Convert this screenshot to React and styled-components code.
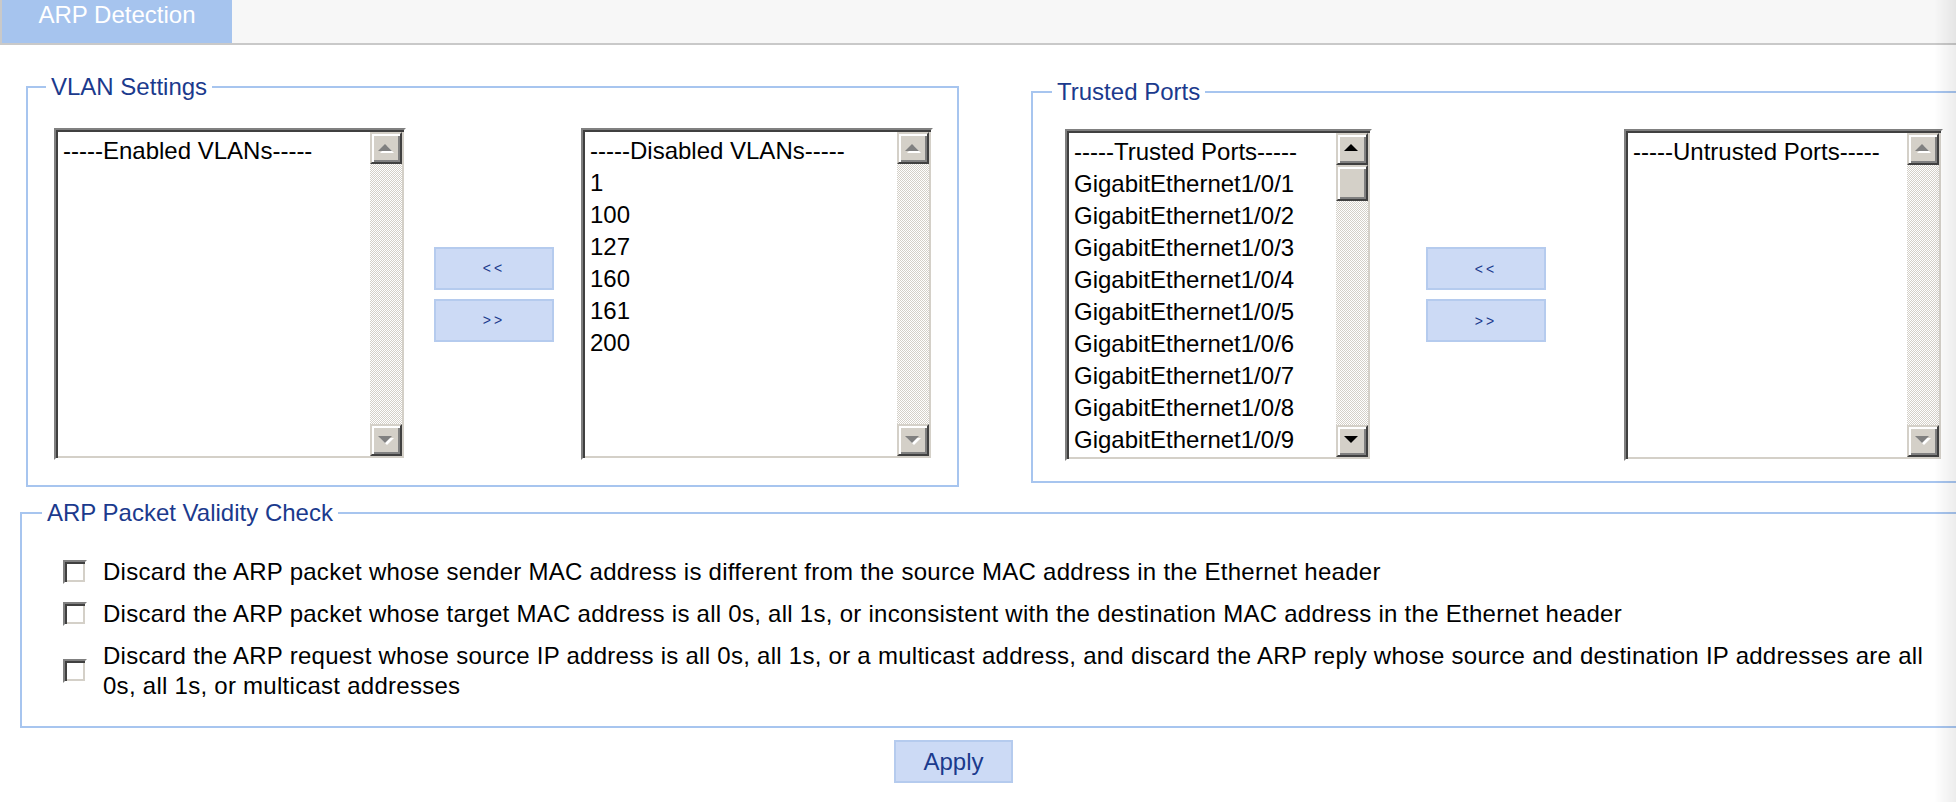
import React from "react"
import styled, { createGlobalStyle } from "styled-components"

const GlobalStyle = createGlobalStyle`
  html, body {
    margin: 0;
    padding: 0;
    background: #ffffff;
    overflow: hidden;
  }
  body {
    font-family: "Liberation Sans", Arial, sans-serif;
    font-size: 24px;
    color: #000;
  }
`

const Page = styled.div`
  width: 1956px;
  height: 802px;
  overflow: hidden;
`

const TabBar = styled.div`
  display: flex;
  height: 43px;
  background: #f7f7f7;
  border-bottom: 2px solid #c9c9c9;
`

const Tab = styled.div`
  width: 230px;
  border-left: 2px solid #c9c9c9;
  background: #a6c4ee;
  color: #ffffff;
  font-size: 24px;
  line-height: 28px;
  padding-top: 1px;
  text-align: center;
`

const Row = styled.div`
  display: flex;
  align-items: center;
  margin-top: ${(p) => p.$top || 0}px;
  padding-left: ${(p) => p.$left || 0}px;
`

const Fieldset = styled.fieldset`
  margin: 0 0 0 ${(p) => p.$gap || 0}px;
  border: 2px solid #a7c5ef;
  padding: ${(p) => p.$pad};
  min-width: 0;
  flex: none;
  width: ${(p) => p.$width}px;
  box-sizing: border-box;
`

const Legend = styled.legend`
  color: #1b3a8d;
  font-size: 24px;
  line-height: 28px;
  padding: 0 5px;
  margin-left: ${(p) => p.$shift}px;
`

const Pair = styled.div`
  display: flex;
  align-items: center;
`

const ListBox = styled.div`
  width: ${(p) => p.$width}px;
  height: 332px;
  box-sizing: border-box;
  border: 2px solid;
  border-color: #808080 #ffffff #ffffff #808080;
  box-shadow: inset 2px 2px 0 #404040, inset -2px -2px 0 #d4d0c8;
  padding: 2px;
  display: flex;
  background: #ffffff;
  flex: none;
`

const Options = styled.div`
  flex: 1;
  padding: 3px 0 0 5px;
  overflow: hidden;
  line-height: 32px;
  white-space: nowrap;
`

const Track = styled.div`
  width: 32px;
  flex: none;
  display: flex;
  flex-direction: column;
  background: repeating-conic-gradient(#d4d0c8 0 25%, #ffffff 0 50%) 0 0 / 2px 2px;
`

const Bevel = styled.div`
  height: ${(p) => p.$h || 32}px;
  box-sizing: border-box;
  background: #d4d0c8;
  border: 2px solid;
  border-color: #d4d0c8 #404040 #404040 #d4d0c8;
  box-shadow: inset 2px 2px 0 #ffffff, inset -2px -2px 0 #808080;
  display: flex;
  align-items: center;
  justify-content: center;
  flex: none;
`

const Spacer = styled.div`
  flex: 1;
`

const Movers = styled.div`
  display: flex;
  flex-direction: column;
  gap: 9px;
  margin: 0 ${(p) => p.$right}px 0 ${(p) => p.$left}px;
`

const BlueButton = styled.button`
  width: ${(p) => p.$w || 120}px;
  height: 43px;
  box-sizing: border-box;
  background: #ccdaf5;
  border: 2px solid #b5cbee;
  color: #1b3a8d;
  font-family: "Liberation Sans", Arial, sans-serif;
  font-size: ${(p) => p.$size || 24}px;
  letter-spacing: ${(p) => p.$spacing || 0}px;
  padding: 0;
  cursor: pointer;
`

const CheckList = styled.div`
  display: flex;
  flex-direction: column;
  gap: 12px;
`

const CheckRow = styled.label`
  display: flex;
  align-items: center;
  gap: 16px;
  line-height: 30px;
`

const Box = styled.span`
  width: 24px;
  height: 24px;
  box-sizing: border-box;
  flex: none;
  margin-left: 1px;
  background: #ffffff;
  border: 2px solid;
  border-color: #808080 #ffffff #ffffff #808080;
  box-shadow: inset 2px 2px 0 #404040, inset -2px -2px 0 #d4d0c8;
`

const CheckText = styled.span`
  width: 1842px;
  flex: none;
  letter-spacing: 0.27px;
`

const Edge = styled.div`
  position: fixed;
  top: 0;
  right: 0;
  width: 22px;
  height: 100%;
  pointer-events: none;
  background: linear-gradient(to right, rgba(0, 0, 0, 0), rgba(0, 0, 0, 0.07));
`

const Arrow = ({ up, on }) => {
  const pts = up ? "0,7 7,0 14,7" : "0,0 14,0 7,7"
  return (
    <svg width="16" height="9" viewBox="0 0 16 9">
      {!on && <polygon points={pts} fill="#ffffff" transform="translate(2 2)" />}
      <polygon points={pts} fill={on ? "#000000" : "#808080"} />
    </svg>
  )
}

const Scrollbar = ({ on }) => (
  <Track>
    <Bevel>
      <Arrow up on={on} />
    </Bevel>
    {on && <Bevel $h={36} />}
    <Spacer />
    <Bevel>
      <Arrow on={on} />
    </Bevel>
  </Track>
)

const List = ({ width, items, on }) => (
  <ListBox $width={width}>
    <Options>
      {items.map((item) => (
        <div key={item}>{item}</div>
      ))}
    </Options>
    <Scrollbar on={on} />
  </ListBox>
)

const ports = Array.from({ length: 9 }, (_, i) => `GigabitEthernet1/0/${i + 1}`)

const checks = [
  "Discard the ARP packet whose sender MAC address is different from the source MAC address in the Ethernet header",
  "Discard the ARP packet whose target MAC address is all 0s, all 1s, or inconsistent with the destination MAC address in the Ethernet header",
  "Discard the ARP request whose source IP address is all 0s, all 1s, or a multicast address, and discard the ARP reply whose source and destination IP addresses are all 0s, all 1s, or multicast addresses",
]

export default function App() {
  return (
    <Page>
      <GlobalStyle />
      <TabBar>
        <Tab>ARP Detection</Tab>
      </TabBar>

      <Row $top={28} $left={26}>
        <Fieldset $width={933} $pad="27px 25px 25px 26px">
          <Legend $shift={-8}>VLAN Settings</Legend>
          <Pair>
            <List width={352} items={["-----Enabled VLANs-----"]} />
            <Movers $left={28} $right={27}>
              <BlueButton $size={14} $spacing={3}>&lt;&lt;</BlueButton>
              <BlueButton $size={14} $spacing={3}>&gt;&gt;</BlueButton>
            </Movers>
            <List
              width={352}
              items={["-----Disabled VLANs-----", "1", "100", "127", "160", "161", "200"]}
            />
          </Pair>
        </Fieldset>

        <Fieldset $gap={72} $width={1000} $pad="23px 20px 20px 32px">
          <Legend $shift={-13}>Trusted Ports</Legend>
          <Pair>
            <List width={307} items={["-----Trusted Ports-----", ...ports]} on />
            <Movers $left={54} $right={78}>
              <BlueButton $size={14} $spacing={3}>&lt;&lt;</BlueButton>
              <BlueButton $size={14} $spacing={3}>&gt;&gt;</BlueButton>
            </Movers>
            <List width={319} items={["-----Untrusted Ports-----"]} />
          </Pair>
        </Fieldset>
      </Row>

      <Row $top={12} $left={20}>
        <Fieldset $width={2000} $pad="30px 20px 25px 40px">
          <Legend $shift={-20}>ARP Packet Validity Check</Legend>
          <CheckList>
            {checks.map((text) => (
              <CheckRow key={text}>
                <Box />
                <CheckText>{text}</CheckText>
              </CheckRow>
            ))}
          </CheckList>
        </Fieldset>
      </Row>

      <Row $top={12} $left={894}>
        <BlueButton $w={119}>Apply</BlueButton>
      </Row>

      <Edge />
    </Page>
  )
}
